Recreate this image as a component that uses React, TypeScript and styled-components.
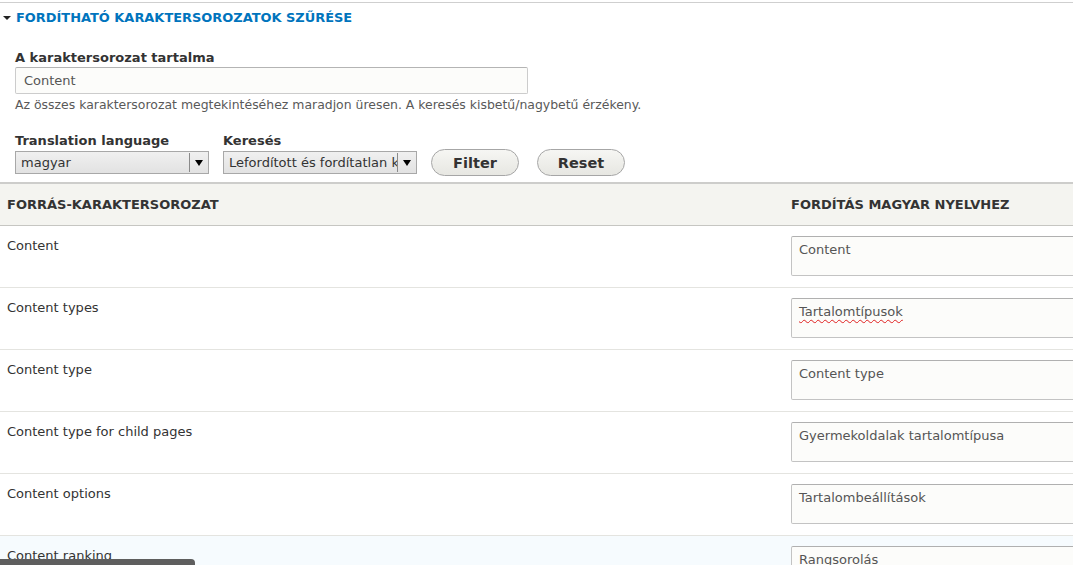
import React from 'react'
import styled, { createGlobalStyle } from 'styled-components'

const GlobalStyle = createGlobalStyle`
  html, body {
    margin: 0;
    padding: 0;
    background: #fff;
    overflow: hidden;
  }
  body {
    font-family: 'DejaVu Sans', 'Liberation Sans', sans-serif;
    font-size: 13px;
    color: #333;
  }
`

const Page = styled.div`
  width: 1073px;
  height: 565px;
  overflow: hidden;
  position: relative;
`

const Fieldset = styled.section`
  margin-top: 2px;
  border-top: 1px solid #cfcfcf;
`

const Legend = styled.div`
  display: flex;
  align-items: center;
  gap: 5px;
  height: 29px;
  padding-left: 3px;
  padding-bottom: 1px;
`

const Caret = styled.span`
  width: 0;
  height: 0;
  border-left: 4px solid transparent;
  border-right: 4px solid transparent;
  border-top: 4px solid #222;
`

const LegendText = styled.span`
  color: #0074bd;
  font-weight: bold;
  font-size: 12.95px;
  text-transform: uppercase;
`

const FormBody = styled.div`
  padding: 16px 15px 0;
`

const Label = styled.div`
  font-weight: bold;
  font-size: 13px;
  line-height: 18px;
`

const TextInput = styled.div`
  box-sizing: border-box;
  width: 513px;
  height: 27px;
  border: 1px solid #ccc;
  border-top-color: #b4b4b4;
  border-radius: 2px;
  background: #fcfcfa;
  color: #555;
  padding: 0 8px;
  line-height: 25px;
`

const Description = styled.div`
  font-size: 12.45px;
  line-height: 16px;
  color: #595959;
  margin-top: 3px;
`

const FilterRow = styled.div`
  display: flex;
  align-items: flex-end;
  margin-top: 19px;
`

const FormItem = styled.div`
  display: flex;
  flex-direction: column;
  margin-right: 14px;
  padding-bottom: 2px;
`

const Select = styled.div`
  box-sizing: border-box;
  display: flex;
  width: 194px;
  height: 23px;
  margin-top: 1px;
  border: 1px solid #a8a8a8;
  background: linear-gradient(#f0f0f0, #e2e2e2);
`

const SelectValue = styled.span`
  flex: 1;
  overflow: hidden;
  white-space: nowrap;
  padding-left: 5px;
  line-height: 21px;
  color: #333;
`

const SelectArrow = styled.span`
  width: 18px;
  display: flex;
  align-items: center;
  justify-content: center;
  border-left: 1px solid #8a8a8a;
  margin: 1px 0;
  &::after {
    content: '';
    border-left: 4.5px solid transparent;
    border-right: 4.5px solid transparent;
    border-top: 6px solid #000;
  }
`

const Button = styled.button<{ $gap?: number }>`
  box-sizing: border-box;
  height: 27px;
  width: 88px;
  margin-left: ${(p) => p.$gap ?? 0}px;
  border: 1px solid #a6a6a6;
  border-radius: 20px;
  background: linear-gradient(#f6f6f3, #e7e7e2);
  font-family: 'DejaVu Sans', sans-serif;
  font-weight: bold;
  font-size: 14.5px;
  color: #333;
  padding: 0;
`

const Table = styled.table`
  width: 1220px;
  border-collapse: collapse;
  margin-top: 6px;
`

const HeadCell = styled.th<{ $w?: number }>`
  width: ${(p) => (p.$w ? `${p.$w}px` : 'auto')};
  box-sizing: border-box;
  text-align: left;
  background: #f4f4f0;
  border-top: 2px solid #cdcdcb;
  border-bottom: 1px solid #c6c6c2;
  height: 42px;
  padding: 0 7px;
  font-size: 13px;
  font-weight: bold;
  text-transform: uppercase;
  color: #333;
`

const Row = styled.tr<{ $hl?: boolean }>`
  background: ${(p) => (p.$hl ? '#f6fbfe' : '#fff')};
  border-bottom: 1px solid #e4e4e0;
`

const Cell = styled.td<{ $source?: boolean }>`
  vertical-align: top;
  padding: ${(p) => (p.$source ? '11px 7px 10px' : '10px 7px 11px')};
  line-height: 18px;
`

const TextArea = styled.div`
  box-sizing: border-box;
  height: 40px;
  border: 1px solid #c3c3c3;
  border-top-color: #b0b0b0;
  border-radius: 2px;
  background: #fcfcfa;
  color: #555;
  padding: 4px 7px 0;
  line-height: 18px;
`

const Misspelled = styled.span`
  text-decoration: underline wavy #e02020;
  text-decoration-thickness: 1px;
  text-underline-offset: 3px;
`

const StatusBar = styled.div`
  position: absolute;
  left: 0;
  bottom: 0;
  width: 195px;
  height: 6px;
  background: #5e5e5e;
  border-top-right-radius: 4px;
`

const rows: { source: string; translation: string; misspelled?: boolean }[] = [
  { source: 'Content', translation: 'Content' },
  { source: 'Content types', translation: 'Tartalomtípusok', misspelled: true },
  { source: 'Content type', translation: 'Content type' },
  { source: 'Content type for child pages', translation: 'Gyermekoldalak tartalomtípusa' },
  { source: 'Content options', translation: 'Tartalombeállítások' },
  { source: 'Content ranking', translation: 'Rangsorolás' },
]

export default function App() {
  return (
    <Page>
      <GlobalStyle />
      <Fieldset>
        <Legend>
          <Caret />
          <LegendText>Fordítható karaktersorozatok szűrése</LegendText>
        </Legend>
        <FormBody>
          <Label>A karaktersorozat tartalma</Label>
          <TextInput>Content</TextInput>
          <Description>
            Az összes karaktersorozat megtekintéséhez maradjon üresen. A keresés kisbetű/nagybetű érzékeny.
          </Description>
          <FilterRow>
            <FormItem>
              <Label>Translation language</Label>
              <Select>
                <SelectValue>magyar</SelectValue>
                <SelectArrow />
              </Select>
            </FormItem>
            <FormItem>
              <Label>Keresés</Label>
              <Select>
                <SelectValue>Lefordított és fordítatlan karaktersorozatok</SelectValue>
                <SelectArrow />
              </Select>
            </FormItem>
            <Button>Filter</Button>
            <Button $gap={18}>Reset</Button>
          </FilterRow>
        </FormBody>
      </Fieldset>
      <Table>
        <thead>
          <tr>
            <HeadCell $w={784}>Forrás-karaktersorozat</HeadCell>
            <HeadCell>Fordítás magyar nyelvhez</HeadCell>
          </tr>
        </thead>
        <tbody>
          {rows.map((r, i) => (
            <Row key={r.source} $hl={i === rows.length - 1}>
              <Cell $source>{r.source}</Cell>
              <Cell>
                <TextArea>
                  {r.misspelled ? <Misspelled>{r.translation}</Misspelled> : r.translation}
                </TextArea>
              </Cell>
            </Row>
          ))}
        </tbody>
      </Table>
      <StatusBar />
    </Page>
  )
}
